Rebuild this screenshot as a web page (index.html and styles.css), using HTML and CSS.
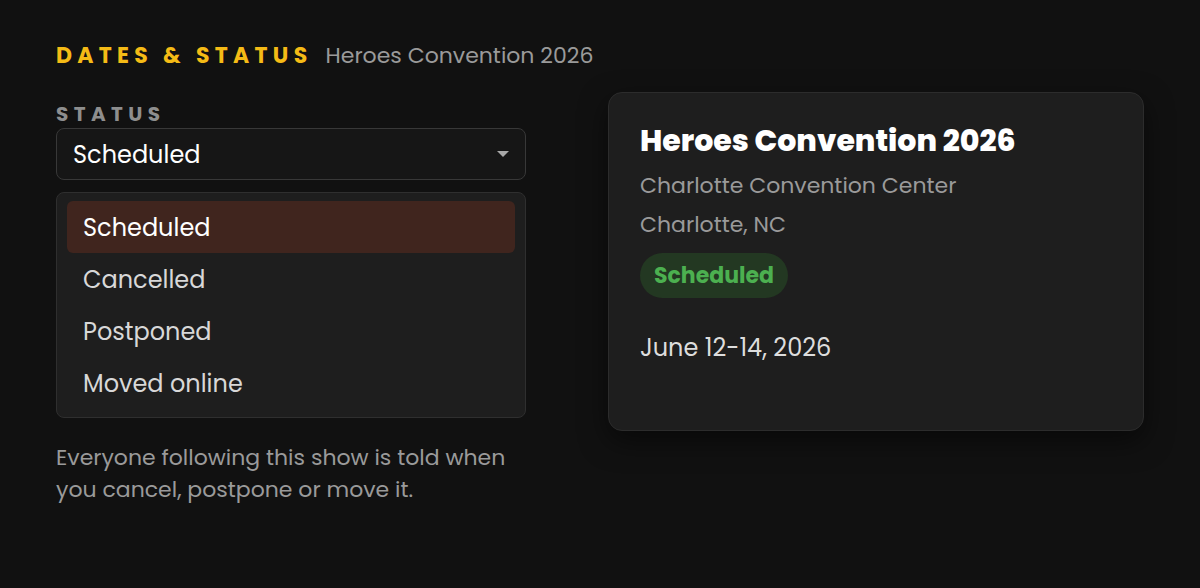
FILE: index.html
```html
<!DOCTYPE html>
<html lang="en">
<head>
<meta charset="utf-8">
<title>Dates &amp; Status</title>
<link rel="stylesheet" href="styles.css">
</head>
<body>
<main class="page">
  <header class="head">
    <h1 class="eyebrow">DATES &amp; STATUS</h1>
    <span class="event-name">Heroes Convention 2026</span>
  </header>
  <div class="columns">
    <section class="form-col">
      <label class="field-label">STATUS</label>
      <div class="select">
        <span class="select-value">Scheduled</span>
        <svg class="caret" width="12" height="6" viewBox="0 0 12 6"><path d="M0 0h12L6 6z" fill="#a8a8a8"/></svg>
      </div>
      <ul class="menu">
        <li class="option active">Scheduled</li>
        <li class="option">Cancelled</li>
        <li class="option">Postponed</li>
        <li class="option">Moved online</li>
      </ul>
      <p class="hint">Everyone following this show is told when you cancel, postpone or move it.</p>
    </section>
    <aside class="card">
      <h2 class="card-title">Heroes Convention 2026</h2>
      <p class="card-sub">Charlotte Convention Center</p>
      <p class="card-sub">Charlotte, NC</p>
      <span class="badge">Scheduled</span>
      <p class="card-date">June 12-14, 2026</p>
    </aside>
  </div>
</main>
</body>
</html>
```
FILE: styles.css
```css
* { box-sizing: border-box; }
html, body { margin: 0; padding: 0; }
body {
  background: #111111;
  font-family: "Poppins", "Open Sans", "DejaVu Sans", sans-serif;
  color: #e6e6e6;
  width: 1200px;
  height: 588px;
  overflow: hidden;
}
.page { padding: 40px 56px 0 56px; }
.head { display: flex; align-items: baseline; gap: 13px; height: 32px; line-height: 32px; }
.eyebrow {
  margin: 0;
  font-size: 22px;
  font-weight: 700;
  letter-spacing: 5.3px;
  color: #f5bb16;
}
.event-name { font-size: 22px; color: #9a9a9a; }
.columns { display: flex; gap: 82px; margin-top: 30px; }
.form-col { width: 470px; display: flex; flex-direction: column; }
.field-label {
  font-size: 20px;
  font-weight: 700;
  letter-spacing: 5.4px;
  color: #8e8e8e;
  line-height: 24px;
  height: 26px;
}
.select {
  height: 52px;
  border: 1px solid #383838;
  border-radius: 8px;
  background: #161616;
  display: flex;
  align-items: center;
  justify-content: space-between;
  padding: 0 16px 0 16px;
}
.select-value { font-size: 24px; color: #ffffff; }
.caret { display: block; }
.menu {
  list-style: none;
  margin: 12px 0 0 0;
  padding: 8px 10px;
  background: #1e1e1e;
  border: 1px solid #2f2f2f;
  border-radius: 8px;
}
.option {
  height: 52px;
  display: flex;
  align-items: center;
  padding: 0 16px;
  font-size: 24px;
  color: #d8d8d8;
  border-radius: 6px;
}
.option.active { background: #40251e; color: #ffffff; }
.hint {
  margin: 24px 0 0 0;
  font-size: 22px;
  line-height: 32px;
  color: #9a9a9a;
}
.card {
  width: 536px;
  height: 339px;
  margin-top: -10px;
  background: #1e1e1e;
  border: 1px solid #2c2c2c;
  border-radius: 14px;
  box-shadow: 0 10px 28px rgba(0,0,0,0.5);
  padding: 24px 31px;
  display: flex;
  flex-direction: column;
  align-items: flex-start;
}
.card-title {
  margin: 0 0 1px 0;
  font-size: 30px;
  font-weight: 800;
  color: #ffffff;
  line-height: 48px;
}
.card-sub { margin: 0; font-size: 22px; color: #9a9a9a; line-height: 39px; }
.badge {
  margin-top: 9px;
  height: 45px;
  display: inline-flex;
  align-items: center;
  padding: 0 14px;
  border-radius: 23px;
  background: #233822;
  color: #4cb050;
  font-size: 22px;
  font-weight: 700;
}
.card-date { margin: 34px 0 0 0; font-size: 24px; color: #dddddd; line-height: 32px; }
```
